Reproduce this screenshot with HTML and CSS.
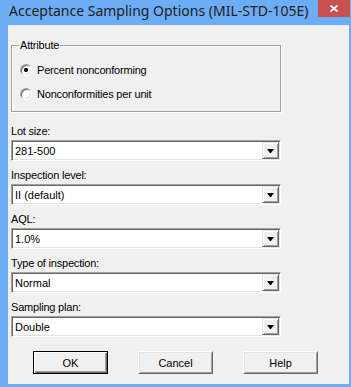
FILE: index.html
```html
<!DOCTYPE html>
<html lang="en">
<head>
  <meta charset="utf-8">
  <title>Acceptance Sampling Options (MIL-STD-105E)</title>
  <link rel="stylesheet" href="styles.css">
</head>
<body>
  <div class="window">
    <div class="titlebar">
      <span class="title">Acceptance Sampling Options (MIL-STD-105E)</span>
      <button class="close" type="button" aria-label="Close">
        <svg width="8" height="7" viewBox="0 0 8 7">
          <path d="M0.5 0.5 L7.5 6.5 M7.5 0.5 L0.5 6.5" stroke="#ffffff" stroke-width="1.7" fill="none"/>
        </svg>
      </button>
    </div>

    <form class="client" id="sampling-options">
      <!-- Attribute group -->
      <fieldset class="group">
        <legend class="group-title">Attribute</legend>
        <label class="radio">
          <input class="radio-input" type="radio" name="attribute" value="percent" checked>
          <span>Percent nonconforming</span>
        </label>
        <label class="radio">
          <input class="radio-input" type="radio" name="attribute" value="per-unit">
          <span>Nonconformities per unit</span>
        </label>
      </fieldset>

      <label class="field">
        <span class="field-title">Lot size:</span>
        <span class="select-wrapper">
          <select class="select" name="lot-size">
            <option>281-500</option>
          </select>
        </span>
      </label>

      <label class="field">
        <span class="field-title">Inspection level:</span>
        <span class="select-wrapper">
          <select class="select" name="level">
            <option>II (default)</option>
          </select>
        </span>
      </label>

      <label class="field">
        <span class="field-title">AQL:</span>
        <span class="select-wrapper">
          <select class="select" name="aql">
            <option>1.0%</option>
          </select>
        </span>
      </label>

      <label class="field">
        <span class="field-title">Type of inspection:</span>
        <span class="select-wrapper">
          <select class="select" name="inspection">
            <option>Normal</option>
          </select>
        </span>
      </label>

      <label class="field">
        <span class="field-title">Sampling plan:</span>
        <span class="select-wrapper">
          <select class="select" name="plan">
            <option>Double</option>
          </select>
        </span>
      </label>

      <div class="buttons">
        <button class="button button-default" type="submit">OK</button>
        <button class="button" type="button">Cancel</button>
        <button class="button" type="button">Help</button>
      </div>
    </form>
  </div>
</body>
</html>
```

FILE: styles.css
```css
*, *::before, *::after {
  margin: 0;
  padding: 0;
  box-sizing: border-box;
}

body {
  background-color: #6cadf5;
  font-family: "Liberation Sans", Arial, sans-serif;
  font-size: 11px;
  color: #000000;
}

.window {
  width: 351px;
  height: 387px;
  display: flex;
  flex-direction: column;
  padding: 0 2px 3px 8px;
  background-color: #6cadf5;
}

.titlebar {
  height: 25px;
  display: flex;
  align-items: flex-start;
  justify-content: space-between;
  margin-left: -8px;
  margin-right: -2px;
}

.title {
  padding-left: 9px;
  font-family: "Noto Sans", sans-serif;
  font-size: 14px;
  line-height: 22px;
  color: #1e1e1e;
  white-space: nowrap;
}

.close {
  width: 32px;
  height: 17px;
  margin-right: 1px;
  display: flex;
  align-items: center;
  justify-content: center;
  border: none;
  background-color: #c75050;
}

.client {
  flex: 1;
  display: flex;
  flex-direction: column;
  gap: 7px;
  padding: 13px 0 0 3px;
  background-color: #f0f0f0;
}

.group {
  width: 270px;
  min-inline-size: 0;
  margin: 0 0 5px;
  padding: 10px 8px 9px;
  border: 1px solid #a0a0a0;
  box-shadow: inset 1px 1px #ffffff, 1px 1px #ffffff;
}

.group-title {
  margin-left: -1px;
  padding: 0 1px;
  line-height: 14px;
  letter-spacing: -0.2px;
}

.radio {
  height: 16px;
  display: flex;
  align-items: center;
  letter-spacing: -0.2px;
}

.radio + .radio {
  margin-top: 8px;
}

.radio-input {
  width: 12px;
  height: 12px;
  margin-right: 5px;
  border: 1px solid;
  border-color: #a0a0a0 #ffffff #ffffff #a0a0a0;
  border-radius: 50%;
  background-color: #ffffff;
  box-shadow: inset 1px 1px #696969, inset -1px -1px #e3e3e3;
  -webkit-appearance: none;
  appearance: none;
}

.radio-input:checked {
  background-image: radial-gradient(circle, #000000 0, #000000 1.8px, #ffffff 2.4px);
}

.field {
  display: flex;
  flex-direction: column;
  gap: 2px;
}

.field-title {
  line-height: 14px;
  letter-spacing: -0.2px;
}

.select-wrapper {
  position: relative;
  width: 270px;
}

.select {
  width: 100%;
  height: 21px;
  padding: 0 22px 0 3px;
  border: 1px solid;
  border-color: #a0a0a0 #ffffff #ffffff #a0a0a0;
  border-radius: 0;
  background-color: #ffffff;
  box-shadow: inset 1px 1px #696969, inset -1px -1px #e3e3e3;
  color: #000000;
  font-family: inherit;
  font-size: inherit;
  outline: none;
  -webkit-appearance: none;
  appearance: none;
}

/* drop-down button */
.select-wrapper::after {
  content: "";
  position: absolute;
  top: 2px;
  right: 2px;
  width: 17px;
  height: 17px;
  border: 1px solid;
  border-color: #e3e3e3 #696969 #696969 #e3e3e3;
  background-color: #f0f0f0;
  box-shadow: inset 1px 1px #ffffff, inset -1px -1px #a0a0a0;
  pointer-events: none;
}

/* arrow */
.select-wrapper::before {
  content: "";
  position: absolute;
  z-index: 1;
  top: 9px;
  right: 7px;
  width: 1px;
  height: 0;
  border-top: 4px solid #000000;
  border-left: 3px solid transparent;
  border-right: 3px solid transparent;
  box-sizing: content-box;
  pointer-events: none;
}

.buttons {
  display: flex;
  gap: 30px;
  margin-top: 7px;
  padding-left: 22px;
}

.button {
  width: 75px;
  height: 23px;
  border: 1px solid;
  border-color: #ffffff #696969 #696969 #ffffff;
  background-color: #f0f0f0;
  box-shadow: inset 1px 1px #e3e3e3, inset -1px -1px #a0a0a0;
  color: #000000;
  font-family: inherit;
  font-size: inherit;
}

.button-default {
  border-color: #000000;
  box-shadow: inset 1px 1px #ffffff, inset -1px -1px #696969, inset -2px -2px #a0a0a0;
}
```
